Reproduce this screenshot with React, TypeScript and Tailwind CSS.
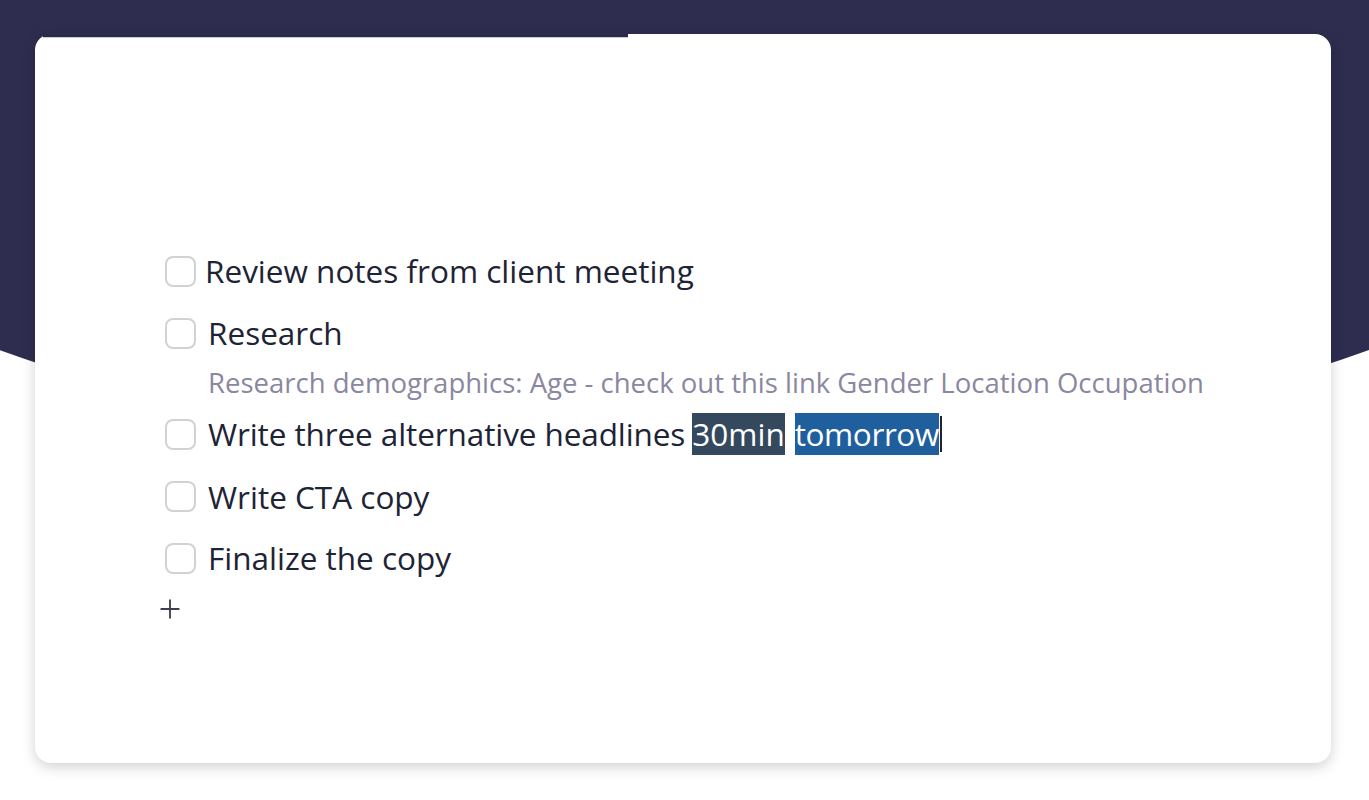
import { Plus } from 'lucide-react';

type Task = { title: string; note?: string };

const tasks: Task[] = [
  { title: 'Review notes from client meeting' },
  { title: 'Research', note: 'Research demographics: Age - check out this link Gender Location Occupation' },
];

function Checkbox() {
  return <span className="block h-[31px] w-[31px] shrink-0 rounded-[8px] border-2 border-[#d2d2d6] bg-white" />;
}

export default function App() {
  return (
    <div className="relative h-[800px] w-full overflow-hidden bg-white" style={{ fontFamily: '"Open Sans", "Noto Sans", sans-serif' }}>
      <div className="absolute left-[-316px] top-0 h-[455px] w-[2000px] rounded-bl-[1000px_387px] rounded-br-[1000px_387px] bg-[#2e2d4f]" />

      <div className="relative ml-[35px] pt-[34px]">
        <div className="relative h-[729px] w-[1296px] rounded-[16px] bg-white shadow-[0_4px_14px_rgba(0,0,0,0.18)]">
          <div className="absolute left-[8px] top-0 h-[4px] w-[585px] border-b border-[#c9c8da] bg-[#2b2a48]" />

          <div className="pl-[130px] pt-[206px] text-[#1d2436]">
            <div className="flex h-[62px] items-center gap-[9px]">
              <Checkbox />
              <span className="text-[31.5px]">{tasks[0].title}</span>
            </div>
            <div className="flex h-[62px] items-center gap-[12px]">
              <Checkbox />
              <span className="text-[31.5px]">{tasks[1].title}</span>
            </div>
            <div className="flex h-[38px] items-center pl-[43px] text-[27.5px] text-[#8a87a1]">{tasks[1].note}</div>

            <div className="flex h-[64px] items-center gap-[12px]">
              <Checkbox />
              <span className="flex items-center text-[31.5px]">
                <span className="tracking-[-0.1px]">Write three alternative headlines</span>
                <span className="ml-[7px] flex h-[42px] items-center bg-[#34495e] text-white">30min</span>
                <span className="ml-[10px] flex h-[42px] items-center bg-[#1f5f9e] tracking-[-0.4px] text-white">tomorrow</span>
                <span className="ml-[1px] h-[36px] w-[2px] bg-[#1d2436]" />
              </span>
            </div>

            <div className="flex h-[61px] items-center gap-[12px]">
              <Checkbox />
              <span className="text-[31.5px]">Write CTA copy</span>
            </div>
            <div className="flex h-[62px] items-center gap-[12px]">
              <Checkbox />
              <span className="text-[31.5px]">Finalize the copy</span>
            </div>
            <div className="flex h-[40px] items-center">
              <Plus className="-ml-[10px] h-[30px] w-[30px] text-[#3f3f50]" strokeWidth={1.5} />
            </div>
          </div>
        </div>
      </div>
    </div>
  );
}
